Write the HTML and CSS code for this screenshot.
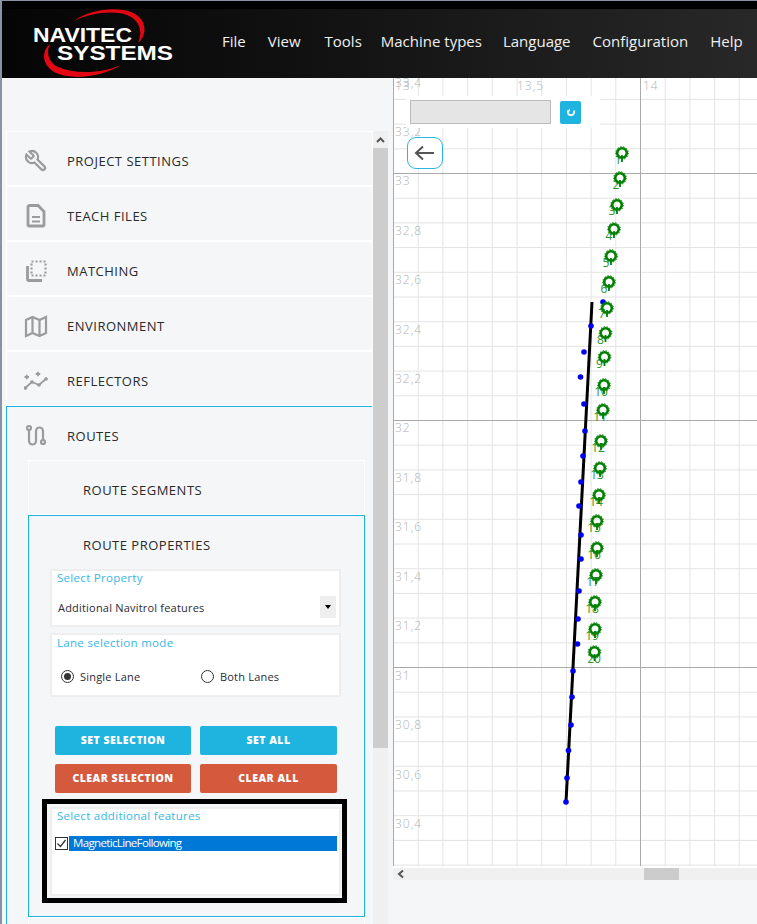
FILE: index.html
```html
<!DOCTYPE html>
<html lang="en">
<head>
<meta charset="utf-8">
<title>Navitec Systems</title>
<link rel="stylesheet" href="styles.css">
</head>
<body>
<div class="strip"></div>
<header class="header">
  <svg class="logo" viewBox="0 0 190 69" width="190" height="69">
    <path class="swoosh" d="M74 12C88 1 116-3 131 3 147 9 148 26 138 34 143 23 140 11 127 6 112 1 90 4 74 12Z"/>
    <path class="swoosh" d="M50 35C41 42 42 56 54 63 72 72 102 68 121 56 103 64 76 66 58 58 48 53 46 43 50 35Z"/>
    <text class="logo-text" x="33" y="33" textLength="99" lengthAdjust="spacingAndGlyphs">NAVITEC</text>
    <text class="logo-text" x="57" y="51" textLength="116" lengthAdjust="spacingAndGlyphs">SYSTEMS</text>
  </svg>
  <nav class="menu">
    <span>File</span><span>View</span><span class="menu-tools">Tools</span><span class="menu-machine">Machine types</span><span>Language</span><span>Configuration</span><span>Help</span>
  </nav>
</header>
<main class="main">
  <aside class="sidebar">
    <div class="list">
      <div class="item">
        <svg class="icon" viewBox="0 0 24 24"><path transform="translate(24 0) scale(-1 1)" d="M14.7 6.3a1 1 0 0 0 0 1.4l1.6 1.6a1 1 0 0 0 1.4 0l3.77-3.77a6 6 0 0 1-7.94 7.94l-6.91 6.91a2.12 2.12 0 0 1-3-3l6.91-6.91a6 6 0 0 1 7.94-7.94l-3.76 3.76z"/></svg>
        <span>PROJECT SETTINGS</span>
      </div>
      <div class="item">
        <svg class="icon" viewBox="0 0 24 24"><path class="thick" d="M5.500 1.500h8.500l6 6v13a1.500 1.500 0 0 1-1.500 1.500h-13a1.500 1.500 0 0 1-1.500-1.500v-17.500a1.500 1.500 0 0 1 1.500-1.500z"/><path d="M8 13h8M8 17.500h8"/></svg>
        <span>TEACH FILES</span>
      </div>
      <div class="item">
        <svg class="icon" viewBox="0 0 24 24"><path class="thick" d="M3.500 7v13a1.500 1.500 0 0 0 1.500 1.500H18"/><rect class="dots" x="7.500" y="2.500" width="14" height="14"/></svg>
        <span>MATCHING</span>
      </div>
      <div class="item">
        <svg class="icon" viewBox="0 0 24 24"><path d="M2 6v16l6.500-3 7 3 6.500-3V3l-6.500 3-7-3zM8.500 3v16M15.500 6v16"/></svg>
        <span>ENVIRONMENT</span>
      </div>
      <div class="item">
        <svg class="icon" viewBox="0 0 24 24"><path class="thin" d="M1 19l7-6 7 3 8-7"/><circle class="node" cx="1.500" cy="19" r="1.800"/><circle class="node" cx="8" cy="13" r="1.800"/><circle class="node" cx="15" cy="16" r="1.800"/><circle class="node" cx="22" cy="10" r="1.800"/><path class="thin" d="M0.500 8h4.500M2.700 5.800v4.500M11.700 5h4.500M14 2.800v4.500"/></svg>
        <span>REFLECTORS</span>
      </div>
      <section class="routes">
        <div class="item item-head">
          <svg class="icon" viewBox="0 0 24 24"><path d="M5 6v11a3.500 3.500 0 0 0 7 0V7a3.500 3.500 0 0 1 7 0v9"/><circle cx="5" cy="4" r="2"/><circle cx="19" cy="18" r="2"/></svg>
          <span>ROUTES</span>
        </div>
        <div class="sub">ROUTE SEGMENTS</div>
        <div class="props">
          <div class="sub-head">ROUTE PROPERTIES</div>
          <div class="card card-select">
            <div class="card-label">Select Property</div>
            <div class="select-row">
              <span>Additional Navitrol features</span>
              <span class="arrow-box"><i class="arrow"></i></span>
            </div>
          </div>
          <div class="card card-lane">
            <div class="card-label">Lane selection mode</div>
            <div class="radios">
              <label class="radio-opt"><i class="radio on"></i>Single Lane</label>
              <label class="radio-opt"><i class="radio"></i>Both Lanes</label>
            </div>
          </div>
          <div class="buttons">
            <button class="btn btn-blue">SET SELECTION</button>
            <button class="btn btn-blue">SET ALL</button>
            <button class="btn btn-red">CLEAR SELECTION</button>
            <button class="btn btn-red">CLEAR ALL</button>
          </div>
          <div class="highlight">
            <div class="card card-features">
              <div class="card-label">Select additional features</div>
              <div class="feature">
                <svg class="check" viewBox="0 0 13 13" width="13" height="13"><rect x="0.500" y="0.500" width="12" height="12"/><path d="M2.500 6.500l3 3 5-6.500"/></svg>
                <span class="feature-name">MagneticLineFollowing</span>
              </div>
            </div>
          </div>
        </div>
        <div class="sub"></div>
      </section>
    </div>
    <div class="vscroll">
      <div class="vs-btn"><svg viewBox="0 0 15 17" width="15" height="17"><path d="M4 11l3.500-3.500L11 11"/></svg></div>
      <div class="vs-thumb"></div>
      <div class="vs-track"></div>
    </div>
  </aside>
  <section class="map">
    <svg class="canvas" viewBox="393 78 364 790" width="364" height="790">
      <rect x="393" y="78" width="364" height="790" fill="#fff"/>
      <path class="minor" d="M418.200 78V866M442.900 78V866M467.600 78V866M492.300 78V866M517 78V866M541.700 78V866M566.400 78V866M591.100 78V866M615.800 78V866M665.200 78V866M689.900 78V866M714.600 78V866M739.300 78V866"/>
      <path class="minor" d="M393 99.400H757M393 124.100H757M393 148.800H757M393 198.200H757M393 222.900H757M393 247.600H757M393 272.300H757M393 297H757M393 321.700H757M393 346.400H757M393 371.100H757M393 395.800H757M393 445.200H757M393 469.900H757M393 494.600H757M393 519.300H757M393 544H757M393 568.700H757M393 593.400H757M393 618.100H757M393 642.800H757M393 692.200H757M393 716.900H757M393 741.600H757M393 766.300H757M393 791H757M393 815.700H757M393 840.400H757M393 865.100H757"/>
      <path class="major" d="M393.500 78V866M640.500 78V866M393 173.500H757M393 420.500H757M393 667.500H757"/>
      <g class="axis">
        <text x="395" y="90">13</text><text x="517" y="90">13,5</text><text x="643" y="90">14</text>
        <text x="395" y="87">33,4</text><text x="395" y="136">33,2</text><text x="395" y="185">33</text><text x="395" y="235">32,8</text>
        <text x="395" y="284">32,6</text><text x="395" y="334">32,4</text><text x="395" y="383">32,2</text><text x="395" y="432">32</text>
        <text x="395" y="482">31,8</text><text x="395" y="531">31,6</text><text x="395" y="581">31,4</text><text x="395" y="630">31,2</text>
        <text x="395" y="680">31</text><text x="395" y="729">30,8</text><text x="395" y="779">30,6</text><text x="395" y="828">30,4</text>
      </g>
      <line class="route" x1="592" y1="302" x2="566" y2="802"/>
      <g class="dots-blue">
        <circle cx="603" cy="302" r="2.800"/><circle cx="591" cy="326" r="2.800"/><circle cx="584" cy="352" r="2.800"/><circle cx="580.500" cy="377" r="2.800"/><circle cx="584" cy="404" r="2.800"/><circle cx="585" cy="431" r="2.800"/><circle cx="583" cy="456" r="2.800"/><circle cx="581" cy="482" r="2.800"/><circle cx="579" cy="506" r="2.800"/><circle cx="581" cy="535" r="2.800"/><circle cx="581" cy="559" r="2.800"/><circle cx="579" cy="591" r="2.800"/><circle cx="578" cy="619" r="2.800"/><circle cx="577.500" cy="644" r="2.800"/><circle cx="573" cy="671" r="2.800"/><circle cx="572" cy="697" r="2.800"/><circle cx="571" cy="725" r="2.800"/><circle cx="568.500" cy="750.500" r="2.800"/><circle cx="567" cy="778" r="2.800"/><circle cx="566" cy="802" r="2.800"/>
      </g>
      <g class="m-labels">
        <text x="618" y="164">1</text><text x="616" y="189">2</text><text x="612" y="215">3</text><text x="609" y="240">4</text><text x="606" y="267">5</text><text x="604" y="293">6</text><text x="602" y="318">7</text><text x="600.500" y="344">8</text><text x="599.500" y="368">9</text><text x="601" y="396">10</text><text x="600" y="421">11</text><text x="598" y="452">12</text><text x="597" y="479">13</text><text x="596" y="506">14</text><text x="594" y="532">15</text><text x="594" y="559">16</text><text x="593" y="586">17</text><text x="592" y="613">18</text><text x="592" y="640">19</text><text x="594" y="663">20</text>
      </g>
      <defs>
        <g id="marker"><circle class="m-ring" r="4.800"/><circle class="m-edge" r="6.300"/><path class="m-stem" d="M0 2V9"/></g>
      </defs>
      <g class="markers">
        <use href="#marker" x="622" y="153"/><use href="#marker" x="620" y="178"/><use href="#marker" x="617" y="205"/><use href="#marker" x="614" y="229"/><use href="#marker" x="611" y="256"/><use href="#marker" x="609" y="282"/><use href="#marker" x="607" y="308"/><use href="#marker" x="605.500" y="333"/><use href="#marker" x="604.500" y="357"/><use href="#marker" x="604" y="385"/><use href="#marker" x="603" y="410"/><use href="#marker" x="601" y="441"/><use href="#marker" x="600" y="468"/><use href="#marker" x="599" y="495"/><use href="#marker" x="597" y="521"/><use href="#marker" x="597" y="548"/><use href="#marker" x="596" y="575"/><use href="#marker" x="595" y="602"/><use href="#marker" x="595" y="629"/><use href="#marker" x="594.500" y="652"/>
      </g>
    </svg>
    <div class="search">
      <div class="search-input"></div>
      <button class="search-btn"><svg viewBox="0 0 10 10" width="10" height="10"><path d="M2 3.500a3.300 3.300 0 1 0 6 0"/><path class="tip" d="M1 4.500h3v-3z"/></svg></button>
    </div>
    <button class="back"><svg viewBox="0 0 22 16" width="22" height="16"><path d="M20 8H2M9 1.500L2 8l7 6.500"/></svg></button>
    <div class="hscroll">
      <svg class="hs-arrow" viewBox="0 0 8 10" width="8" height="10"><path d="M6 1.500L2 5l4 3.500"/></svg>
      <div class="hs-thumb"></div>
    </div>
  </section>
</main>
</body>
</html>
```

FILE: styles.css
```css
* { box-sizing: border-box; }
html, body { margin: 0; height: 100%; }
body {
  height: 924px;
  overflow: hidden;
  display: flex;
  flex-direction: column;
  background: #f4f6f8;
  border-top: 1px solid #8a93a6;
  border-left: 2px solid #8a93a6;
  font-family: "Open Sans", "Liberation Sans", sans-serif;
  color: #222;
}
.strip { height: 8px; background: #000; flex: none; }
.header {
  height: 69px;
  flex: none;
  display: flex;
  align-items: flex-start;
  background: linear-gradient(90deg, #050505 0%, #111 40%, #282828 100%);
}
.logo { flex: none; display: block; margin-left: -2px; }
.swoosh { fill: #e30613; }
.logo-text { font-family: "Liberation Sans", sans-serif; font-weight: 700; font-size: 20px; fill: #fff; }
.menu {
  display: flex;
  gap: 22px;
  margin-left: 32px;
  padding-top: 21px;
  font-size: 15px;
  line-height: 22px;
  color: #f0f0f0;
  white-space: nowrap;
}
.menu-tools { margin: 0 -3px 0 2px; }
.menu-machine { margin-right: -1px; }
.main { flex: 1; min-height: 0; display: flex; }
.sidebar { width: 391px; flex: none; display: flex; overflow: hidden; }
.list { width: 371px; flex: none; padding: 53px 0 0 4px; }
.item {
  height: 55px;
  display: flex;
  align-items: center;
  gap: 19px;
  padding: 5px 0 0 17px;
  border: 1px solid #fff;
  font-size: 13px;
  letter-spacing: 0.5px;
  color: #2a2a2a;
}
.icon { width: 24px; height: 24px; flex: none; fill: none; stroke: #9b9b9b; stroke-width: 2.200; }
.icon .thick { stroke-width: 2.800; }
.icon .dots { stroke-dasharray: 2 2; }
.icon .thin { stroke-width: 1.800; }
.icon .node { fill: #9b9b9b; stroke: none; }
.routes { border: 1px solid #1fb3e0; border-right: 0; width: 366px; padding-left: 21px; }
.item-head { height: 53px; border: 0; margin-left: -21px; padding-left: 17px; width: 365px; }
.sub {
  width: 337px;
  height: 55px;
  border: 1px solid #fff;
  padding: 5px 0 0 54px;
  display: flex;
  align-items: center;
  font-size: 13px;
  letter-spacing: 0.5px;
  color: #2a2a2a;
}
.props { width: 337px; height: 402px; border: 1px solid #1fb3e0; padding-left: 21px; }
.sub-head {
  height: 53px;
  padding: 5px 0 0 33px;
  display: flex;
  align-items: center;
  font-size: 13px;
  letter-spacing: 0.5px;
  color: #2a2a2a;
}
.card { width: 291px; background: #fff; border: 2px solid #eee; padding: 0 5px; }
.card-label { font-size: 11.500px; line-height: 14px; letter-spacing: 0.3px; color: #35b8e6; }
.card-select { height: 58px; }
.select-row {
  display: flex;
  align-items: center;
  justify-content: space-between;
  margin: 11px -2px 0 0;
  padding-left: 1px;
  height: 22px;
  font-size: 11px;
  letter-spacing: 0.2px;
  color: #2a2a35;
}
.arrow-box { width: 16px; height: 22px; background: #eee; display: flex; align-items: center; justify-content: center; }
.arrow { border: 3px solid transparent; border-top: 4px solid #000; border-bottom: 0; }
.card-lane { height: 64px; margin-top: 6px; padding-top: 1px; }
.radios { display: grid; grid-template-columns: 140px 1fr; padding: 19px 0 0 4px; }
.radio-opt { display: flex; align-items: center; gap: 6px; font-size: 11px; letter-spacing: 0.2px; color: #2a2a35; }
.radio {
  width: 13px;
  height: 13px;
  border: 1px solid #333;
  border-radius: 50%;
  display: flex;
  align-items: center;
  justify-content: center;
  background: #fff;
}
.radio.on::after { content: ""; width: 7px; height: 7px; border-radius: 50%; background: #333; }
.buttons {
  display: grid;
  grid-template-columns: 136px 137px;
  grid-auto-rows: 29px;
  gap: 9px;
  margin: 29px 0 0 5px;
}
.btn {
  border: 0;
  padding: 0 0 2px;
  border-radius: 2px;
  color: #fff;
  font-family: inherit;
  font-size: 10.500px;
  font-weight: 800;
  letter-spacing: 0.5px;
}
.btn-blue { background: #1fb3e0; }
.btn-red { background: #d5593c; }
.highlight { width: 305px; height: 104px; margin: 6px 0 0 -8px; border: 5px solid #000; padding: 3px 1px 2px 3px; }
.card-features { height: 89px; }
.feature { display: flex; align-items: center; height: 15px; margin: 13px -3px 0 -2px; gap: 1px; }
.check { flex: none; }
.check rect { fill: #fff; stroke: #333; }
.check path { fill: none; stroke: #333; stroke-width: 1.300; }
.feature-name {
  flex: 1;
  height: 15px;
  background: #0078d7;
  color: #fff;
  padding-left: 4px;
  font-family: "Open Sans", sans-serif;
  font-size: 11.500px;
  line-height: 14px;
  letter-spacing: -0.65px;
}
.vscroll { width: 15px; flex: none; margin-top: 53px; display: flex; flex-direction: column; background: #f0f0f0; }
.vs-btn { height: 17px; flex: none; }
.vs-btn svg { display: block; fill: none; stroke: #555; stroke-width: 2; }
.vs-thumb { height: 600px; flex: none; background: #cdcdcd; }
.vs-track { flex: 1; }
.map { position: relative; flex: 1; min-width: 0; display: flex; flex-direction: column; }
.canvas { display: block; flex: none; }
.minor { fill: none; stroke: #e4e4e4; stroke-width: 1; }
.major { fill: none; stroke: #aaa; stroke-width: 1; }
.axis text { font-size: 12px; font-weight: 300; letter-spacing: 1px; fill: #b4b4b4; }
.route { stroke: #000; stroke-width: 3; }
.dots-blue { fill: #0000f0; }
.m-ring { fill: none; stroke: #008000; stroke-width: 2.600; }
.m-edge { fill: none; stroke: #008000; stroke-width: 1; stroke-dasharray: 1.500 1.500; }
.m-stem { fill: none; stroke: #008000; stroke-width: 1.800; }
.m-labels text { font-size: 12px; fill: #2c942c; text-anchor: middle; }
.search {
  position: absolute;
  left: 13px;
  top: 18px;
  width: 194px;
  height: 32px;
  background: #fff;
  display: flex;
  align-items: center;
  gap: 9px;
  padding-left: 4px;
}
.search-input { width: 141px; height: 24px; background: #e5e5e5; border: 1px solid #bbb; }
.search-btn {
  width: 21px;
  height: 23px;
  border: 0;
  padding: 0;
  border-radius: 2px;
  background: #1fb3e0;
  display: flex;
  align-items: center;
  justify-content: center;
}
.search-btn path { fill: none; stroke: #fff; stroke-width: 1.800; }
.search-btn .tip { fill: #fff; stroke: none; }
.back {
  position: absolute;
  left: 14px;
  top: 59px;
  width: 36px;
  height: 32px;
  border: 1px solid #2bb5e2;
  border-radius: 9px;
  background: #fff;
  padding: 0;
  display: flex;
  align-items: center;
  justify-content: center;
}
.back path { fill: none; stroke: #555; stroke-width: 2; }
.hscroll { position: relative; height: 12px; flex: none; background: #f0f0f0; }
.hs-arrow { position: absolute; left: 4px; top: 1px; fill: none; }
.hs-arrow path { fill: none; stroke: #555; stroke-width: 2; }
.hs-thumb { position: absolute; left: 251px; top: 0; width: 35px; height: 12px; background: #ccc; }
```
